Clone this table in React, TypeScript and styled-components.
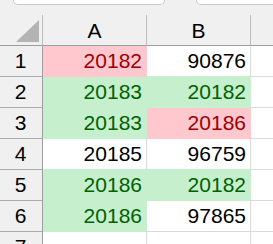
import React from 'react';
import styled, { createGlobalStyle } from 'styled-components';

const GlobalStyle = createGlobalStyle`
  body {
    margin: 0;
    background: #ffffff;
    font-family: 'Liberation Sans', Arial, sans-serif;
    overflow: hidden;
  }
`;

type Fill = 'bad' | 'good' | null;

const FILLS = {
  bad: { bg: '#ffc7ce', fg: '#9c0006' },
  good: { bg: '#c6efce', fg: '#006100' },
};

const GRID_LINE = '#dadada';

interface ICell {
  value: string;
  fill: Fill;
}

// rows of the sheet, column A then column B
const rows: ICell[][] = [
  [{ value: '20182', fill: 'bad' }, { value: '90876', fill: null }],
  [{ value: '20183', fill: 'good' }, { value: '20182', fill: 'good' }],
  [{ value: '20183', fill: 'good' }, { value: '20186', fill: 'bad' }],
  [{ value: '20185', fill: null }, { value: '96759', fill: null }],
  [{ value: '20186', fill: 'good' }, { value: '20182', fill: 'good' }],
  [{ value: '20186', fill: 'good' }, { value: '97865', fill: null }],
  [{ value: '', fill: null }, { value: '', fill: null }],
];

const Sheet = styled.div`
  width: 273px;
  height: 244px;
  overflow: hidden;
  background: #f0f0f0;
`;

const TopStrip = styled.div`
  height: 15px;
  display: flex;
  align-items: flex-start;
  gap: 31px;
  padding-left: 13px;
  overflow: hidden;
`;

const TopBox = styled.div<{ $width: number }>`
  flex: 0 0 ${props => props.$width}px;
  height: 4px;
  background: #ffffff;
  border: 1px solid #c9c9c9;
  border-top: none;
  border-radius: 0 0 6px 6px;
`;

const Grid = styled.div`
  display: grid;
  grid-template-columns: 43px 104px 104px 40px;
  grid-auto-rows: 31px;
  background: #ffffff;
`;

const Corner = styled.div`
  box-sizing: border-box;
  background: #f0f0f0;
  border-right: 1px solid #bdbdbd;
  border-bottom: 1px solid #9e9e9e;
  display: flex;
  align-items: flex-end;
  justify-content: flex-end;
  padding: 0 3px 3px 0;
`;

const ColHeader = styled.div`
  box-sizing: border-box;
  background: #f0f0f0;
  border-right: 1px solid #bdbdbd;
  border-bottom: 1px solid #9e9e9e;
  display: flex;
  align-items: center;
  justify-content: center;
  font-size: 21px;
  color: #000000;
  padding-top: 2px;
`;

const RowHeader = styled.div`
  box-sizing: border-box;
  background: #f0f0f0;
  border-right: 1px solid #9e9e9e;
  border-bottom: 1px solid #ababab;
  display: flex;
  align-items: center;
  justify-content: center;
  font-size: 21px;
  color: #000000;
  padding-right: 1px;
`;

const Cell = styled.div<{ $bg: string; $fg: string; $right: string; $bottom: string }>`
  box-sizing: border-box;
  background: ${props => props.$bg};
  color: ${props => props.$fg};
  border-right: 1px solid ${props => props.$right};
  border-bottom: 1px solid ${props => props.$bottom};
  display: flex;
  align-items: center;
  justify-content: flex-end;
  padding-right: 4px;
  font-size: 21px;
`;

const fillOf = (r: number, c: number): Fill =>
  rows[r] && rows[r][c] ? rows[r][c].fill : null;

const edgeColor = (own: Fill, next: Fill) => {
  if (own) return FILLS[own].bg;
  if (next) return FILLS[next].bg;
  return GRID_LINE;
};

export default function App() {
  return (
    <Sheet>
      <GlobalStyle />
      <TopStrip>
        <TopBox $width={150} />
        <TopBox $width={120} />
      </TopStrip>
      <Grid>
        <Corner>
          <svg width="23" height="22" viewBox="0 0 23 22">
            <polygon points="23,0 23,22 0,22" fill="#b4b4b4" />
          </svg>
        </Corner>
        <ColHeader>A</ColHeader>
        <ColHeader>B</ColHeader>
        <ColHeader />
        {rows.map((row, r) => (
          <React.Fragment key={r}>
            <RowHeader>{r + 1}</RowHeader>
            {row.map((cell, c) => (
              <Cell
                key={c}
                $bg={cell.fill ? FILLS[cell.fill].bg : '#ffffff'}
                $fg={cell.fill ? FILLS[cell.fill].fg : '#000000'}
                $right={edgeColor(cell.fill, fillOf(r, c + 1))}
                $bottom={edgeColor(cell.fill, fillOf(r + 1, c))}
              >
                {cell.value}
              </Cell>
            ))}
            <Cell $bg="#ffffff" $fg="#000000" $right={GRID_LINE} $bottom={GRID_LINE} />
          </React.Fragment>
        ))}
      </Grid>
    </Sheet>
  );
}
